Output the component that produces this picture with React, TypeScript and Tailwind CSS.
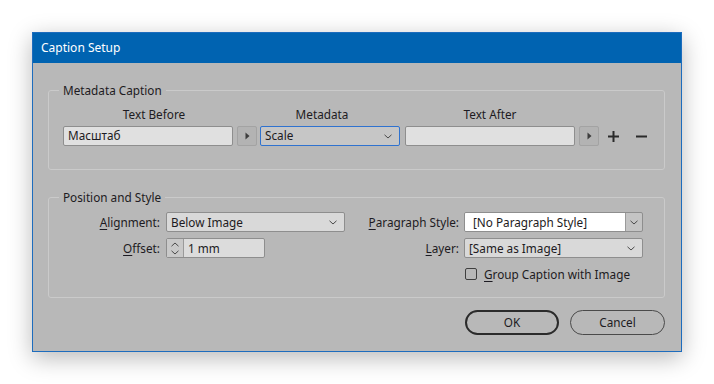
const font = { fontFamily: '"Noto Sans", "Open Sans", sans-serif' };

function Chevron() {
  return (
    <svg width="8" height="5" viewBox="0 0 8 5" className="shrink-0">
      <path d="M0.5 0.8 L4 4 L7.5 0.8" fill="none" stroke="#4a4a4a" strokeWidth="1" />
    </svg>
  );
}

function ArrowButton() {
  return (
    <div className="flex h-[20px] w-[20px] shrink-0 items-center justify-center rounded-[2px] border border-[#a3a3a3] bg-[#b3b3b3]">
      <svg width="5" height="8" viewBox="0 0 5 8">
        <path d="M0.5 0.5 L4.5 4 L0.5 7.5 Z" fill="#3d3d3d" />
      </svg>
    </div>
  );
}

export default function App() {
  return (
    <div className="h-[384px] w-[714px] bg-white pl-[32px] pt-[32px] text-[11.75px] text-[#1d1b22]" style={font}>
      <div className="flex h-[320px] w-[650px] flex-col border border-[#1d6cbd] bg-[#b8b8b8] shadow-[0_6px_22px_rgba(0,0,0,0.28)]">
        {/* Title bar */}
        <div className="flex h-[30px] shrink-0 items-center bg-[#0063b1] pl-[8px] text-[12px] text-white">
          Caption Setup
        </div>

        <div className="flex flex-col pl-[15px] pr-[16px]">
          {/* Metadata Caption */}
          <fieldset className="mt-[19px] border border-[#cacaca] rounded-[3px] pb-[23px]">
            <legend className="ml-[10px] px-[4px] leading-[16px]">Metadata Caption</legend>
            <div className="mt-[8px] flex pl-[14px] leading-[16px]">
              <div className="w-[182px] text-center">Text Before</div>
              <div className="w-[154px] text-center">Metadata</div>
              <div className="w-[182px] text-center">Text After</div>
            </div>
            <div className="mt-[4px] flex items-center pl-[14px]">
              <div className="flex h-[20px] w-[170px] items-center rounded-[2px] border border-[#8e8e8e] bg-[#e0e0e0] pl-[4px]">
                Масштаб
              </div>
              <div className="ml-[4px]">
                <ArrowButton />
              </div>
              <div className="ml-[3px] flex h-[20px] w-[140px] items-center justify-between rounded-[2px] border border-[#2f72cf] bg-[#c6c6c6] pl-[4px] pr-[7px]">
                <span>Scale</span>
                <Chevron />
              </div>
              <div className="ml-[5px] h-[20px] w-[170px] rounded-[2px] border border-[#8e8e8e] bg-[#e0e0e0]" />
              <div className="ml-[4px]">
                <ArrowButton />
              </div>
              <svg width="11" height="11" viewBox="0 0 11 11" className="ml-[9px]">
                <path d="M5.5 0 V11 M0 5.5 H11" stroke="#2a2a2a" strokeWidth="2" />
              </svg>
              <svg width="11" height="11" viewBox="0 0 11 11" className="ml-[17px]">
                <path d="M0 5.5 H11" stroke="#2a2a2a" strokeWidth="2" />
              </svg>
            </div>
          </fieldset>

          {/* Position and Style */}
          <fieldset className="mt-[19px] border border-[#cacaca] rounded-[3px] pb-[15px]">
            <legend className="ml-[10px] px-[4px] leading-[16px]">Position and Style</legend>
            <div className="mt-[7px] grid grid-cols-[117px_179px_119px_179px] gap-y-[6px] leading-[16px]">
              <div className="flex items-center justify-end pr-[6px]">
                <span><u className="underline-offset-2">A</u>lignment:</span>
              </div>
              <div className="flex h-[20px] items-center justify-between rounded-[2px] border border-[#8e8e8e] bg-[#d9d9d9] pl-[4px] pr-[7px]">
                <span>Below Image</span>
                <Chevron />
              </div>
              <div className="flex items-center justify-end pr-[5px]">
                <span><u className="underline-offset-2">P</u>aragraph Style:</span>
              </div>
              <div className="flex h-[20px] rounded-[2px] border border-[#8e8e8e] bg-[#c4c4c4]">
                <div className="flex flex-1 items-center rounded-l-[1px] bg-white pl-[8px]">[No Paragraph Style]</div>
                <div className="flex w-[17px] items-center justify-center border-l border-[#9a9a9a]">
                  <Chevron />
                </div>
              </div>

              <div className="flex items-center justify-end pr-[6px]">
                <span><u className="underline-offset-2">O</u>ffset:</span>
              </div>
              <div className="flex">
                <div className="flex h-[20px] w-[99px] rounded-[2px] border border-[#8e8e8e] bg-[#dcdcdc]">
                  <div className="flex w-[17px] flex-col items-center justify-center gap-[3px] border-r border-[#9a9a9a] bg-[#c9c9c9]">
                    <svg width="8" height="5" viewBox="0 0 8 5">
                      <path d="M0.5 4.2 L4 1 L7.5 4.2" fill="none" stroke="#4a4a4a" strokeWidth="1" />
                    </svg>
                    <svg width="8" height="5" viewBox="0 0 8 5">
                      <path d="M0.5 0.8 L4 4 L7.5 0.8" fill="none" stroke="#4a4a4a" strokeWidth="1" />
                    </svg>
                  </div>
                  <div className="flex items-center pl-[4px]">1 mm</div>
                </div>
              </div>
              <div className="flex items-center justify-end pr-[5px]">
                <span><u className="underline-offset-2">L</u>ayer:</span>
              </div>
              <div className="flex h-[20px] items-center justify-between rounded-[2px] border border-[#8e8e8e] bg-[#d9d9d9] pl-[4px] pr-[7px]">
                <span>[Same as Image]</span>
                <Chevron />
              </div>

              <div className="col-start-4 mt-[2px] flex items-center pl-[1px]">
                <div className="h-[12px] w-[12px] rounded-[2px] border border-[#3f3f3f]" />
                <span className="ml-[7px]"><u className="underline-offset-2">G</u>roup Caption with Image</span>
              </div>
            </div>
          </fieldset>

          {/* Buttons */}
          <div className="mt-[12px] flex justify-end gap-[11px]">
            <button className="h-[25px] w-[94px] rounded-full border-2 border-[#2b2b2b] text-[#1d1b22]">OK</button>
            <button className="h-[25px] w-[95px] rounded-full border border-[#4a4a4a] text-[#1d1b22]">Cancel</button>
          </div>
        </div>
      </div>
    </div>
  );
}
